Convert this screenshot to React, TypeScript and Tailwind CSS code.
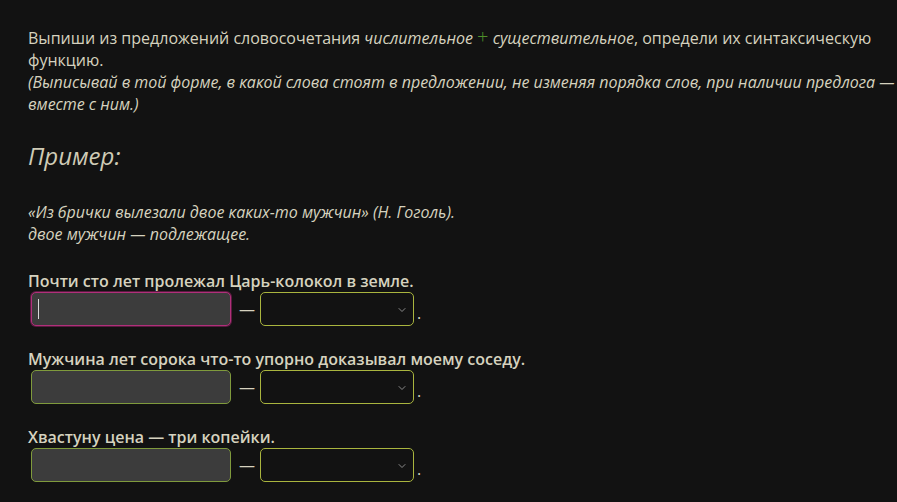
import { ChevronDown } from "lucide-react";

const tasks = [
  { text: "Почти сто лет пролежал Царь-колокол в земле.", focused: true },
  { text: "Мужчина лет сорока что-то упорно доказывал моему соседу.", focused: false },
  { text: "Хвастуну цена — три копейки.", focused: false },
];

function TaskRow({ text, focused }: { text: string; focused: boolean }) {
  return (
    <div className="mb-[22px]">
      <p className="font-semibold leading-[22px]">{text}</p>
      <div className="flex items-center h-[34px] pl-[3px]">
        <div
          className={
            focused
              ? "relative w-[200px] h-[34px] rounded-[5px] bg-[#3c3c3c] border border-[#b0307a] shadow-[0_0_0_1px_#5a1a40]"
              : "w-[200px] h-[34px] rounded-[5px] bg-[#3c3c3c] border border-[#7f9a3c]"
          }
        >
          {focused && <span className="absolute left-[6px] top-[6px] w-px h-[20px] bg-[#d8d8d8]" />}
        </div>
        <span className="ml-[8px] mr-[5px] text-[#d6d2bf]">—</span>
        <div className="relative w-[154px] h-[34px] rounded-[5px] bg-[#121212] border border-[#a9b43e]">
          <ChevronDown className="absolute right-[5px] top-[11px] w-[12px] h-[12px] text-[#8a8a8a]" strokeWidth={2} />
        </div>
        <span className="ml-[3px] mt-[8px] text-[#d6d2bf]">.</span>
      </div>
    </div>
  );
}

export default function App() {
  return (
    <div
      className="min-h-[502px] bg-[#121212] text-[#d6d2bf] text-[16px] leading-[22px] pl-[28px] pt-[26px]"
      style={{ fontFamily: '"Open Sans", "Noto Sans", sans-serif' }}
    >
      <p>
        Выпиши из предложений словосочетания <i>числительное</i>{" "}
        <span className="text-[#4f8f2a] text-[20px] leading-[22px] font-light">+</span> <i>существительное</i>, определи
        их синтаксическую функцию.
      </p>
      <p className="italic tracking-[-0.02px]">
        (Выписывай в той форме, в какой слова стоят в предложении, не изменяя порядка слов, при наличии предлога —
        вместе с ним.)
      </p>

      <h2 className="italic text-[24px] leading-[30px] mt-[26px] text-[#cfcbb6]">Пример:</h2>

      <div className="italic mt-[30px]">
        <p>«Из брички вылезали двое каких-то мужчин» (Н. Гоголь).</p>
        <p>двое мужчин — подлежащее.</p>
      </div>

      <div className="mt-[25px]">
        {tasks.map((t) => (
          <TaskRow key={t.text} text={t.text} focused={t.focused} />
        ))}
      </div>
    </div>
  );
}
